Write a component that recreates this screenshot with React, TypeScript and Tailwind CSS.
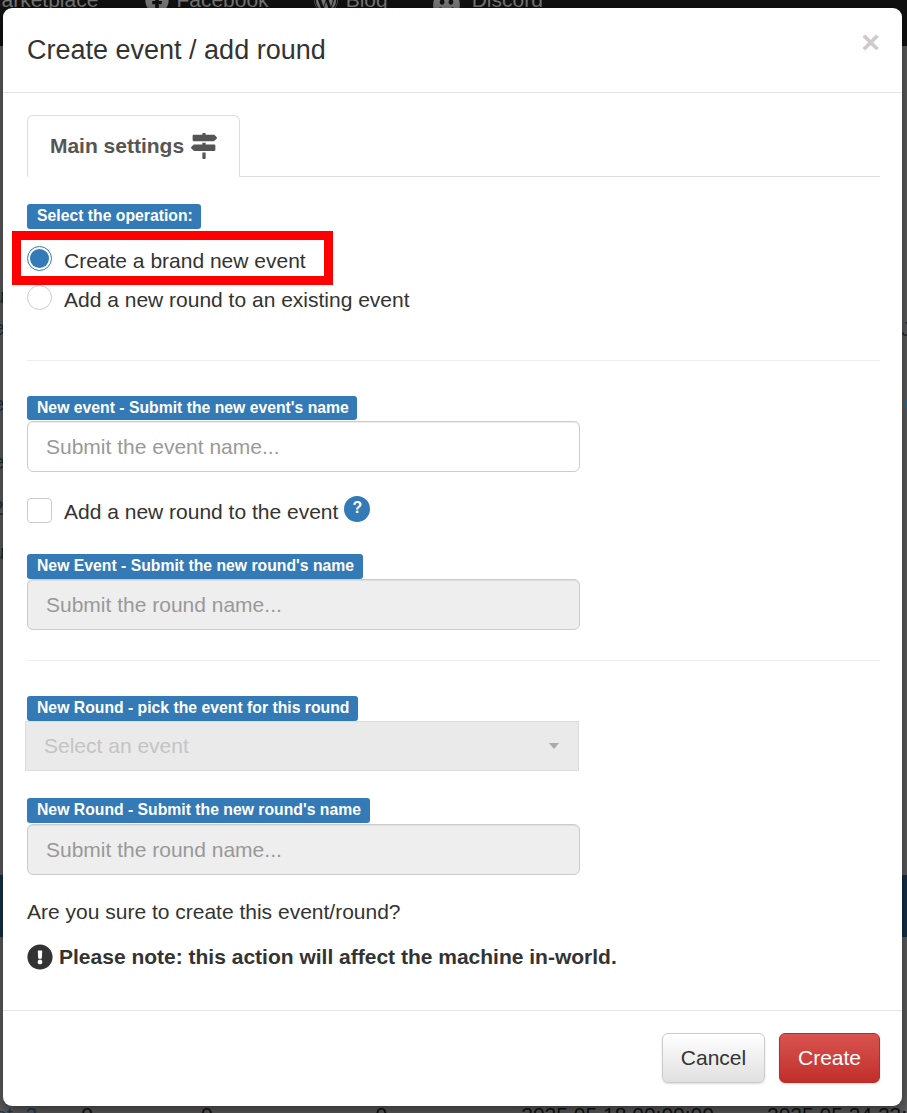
import React from 'react';
import { FaMapSigns, FaExclamationCircle, FaFacebook, FaWordpress, FaDiscord } from 'react-icons/fa';

const font = { fontFamily: '"Liberation Sans", Arial, sans-serif' };

function Badge({ children, className = '' }: { children: React.ReactNode; className?: string }) {
  return (
    <div className={`flex items-center rounded-[3px] bg-[#337ab7] px-[10px] text-[15.75px] font-bold leading-none whitespace-nowrap text-white ${className}`}>
      {children}
    </div>
  );
}

function TextField({ placeholder, disabled }: { placeholder: string; disabled?: boolean }) {
  return (
    <input
      type="text"
      disabled={disabled}
      placeholder={placeholder}
      className={`block h-[51px] w-[553px] rounded-[6px] border border-[#ccc] px-[18px] text-[21px] text-[#555] shadow-[inset_0_1px_1px_rgba(0,0,0,0.075)] outline-none placeholder:text-[#999] placeholder:opacity-100 ${disabled ? 'bg-[#eee]' : 'bg-white'}`}
    />
  );
}

function Radio({ checked }: { checked?: boolean }) {
  return (
    <span className={`flex h-[25px] w-[25px] shrink-0 items-center justify-center rounded-full border bg-white ${checked ? 'border-[#337ab7]' : 'border-[#ccc]'}`}>
      {checked && <span className="h-[19px] w-[19px] rounded-full bg-[#337ab7]" />}
    </span>
  );
}

export default function App() {
  return (
    <div className="relative h-[1113px] w-full overflow-hidden bg-[#5e5e5e]" style={font}>
      {/* page behind the backdrop */}
      <div className="flex h-[46px] items-start bg-[#111] text-[21px] leading-none text-[#777]">
        <span className="-mt-[11px] -ml-[16px]">Marketplace</span>
        <FaFacebook className="-mt-[11px] ml-[47px] h-[24px] w-[24px]" />
        <span className="-mt-[11px] ml-[7px]">Facebook</span>
        <FaWordpress className="-mt-[11px] ml-[45px] h-[24px] w-[24px]" />
        <span className="-mt-[11px] ml-[8px]">Blog</span>
        <FaDiscord className="-mt-[11px] ml-[44px] h-[24px] w-[29px]" />
        <span className="-mt-[11px] ml-[11px]">Discord</span>
      </div>
      <div className="mt-[829px] h-[62px] bg-[#16304a]" />
      <div className="text-[21px] leading-none text-[#1f2f3d]">
        <span className="absolute -left-[7px] top-[285px]">u</span>
        <span className="absolute -left-[7px] top-[317px]">e</span>
        <span className="absolute -left-[7px] top-[393px]">e</span>
        <span className="absolute -left-[7px] top-[451px]">e</span>
        <span className="absolute -left-[8px] top-[497px]">2</span>
        <span className="absolute -left-[7px] top-[541px]">u</span>
        <span className="absolute left-[901px] top-[318px]">J</span>
        <div className="absolute left-[902px] top-[397px] h-[13px] w-[10px] rounded-full border border-[#7a5a30] bg-[#3a6a8a]" />
      </div>
      <div className="absolute bottom-[-12px] left-0 flex w-full text-[21px] leading-none text-[#111]">
        <span className="-ml-[5px] text-[#1b3f63]">ot</span>
        <span className="ml-[13px] text-[#1b3f63]">2</span>
        <span className="ml-[44px]">0</span>
        <span className="ml-[108px]">0</span>
        <span className="ml-[163px]">0</span>
        <span className="ml-[134px] whitespace-nowrap">2025.05.18 00:00:00</span>
        <span className="ml-[53px] whitespace-nowrap">2025.05.24 23:59:59</span>
      </div>

      <div className="absolute left-[3px] top-[8px] flex h-[1098px] w-[899px] flex-col rounded-[9px] bg-white text-[#333] shadow-[0_5px_15px_rgba(0,0,0,0.5)]">
        <div className="relative h-[85px] border-b border-[#e5e5e5] px-[24px] pt-[26px]">
          <h4 className="text-[27px] leading-[32px]">Create event / add round</h4>
          <span className="absolute right-[22px] top-[15px] text-[32px] font-bold leading-[38px] text-[#ccc]">×</span>
        </div>

        <div className="flex-1 pl-[24px] pr-[22px] pt-[22px]">
          <div className="flex h-[62px] border-b border-[#ddd]">
            <div className="-mb-px flex h-[62px] w-[213px] items-center justify-center gap-[7px] rounded-t-[6px] border border-b-0 border-[#ddd] bg-white pb-[2px] text-[21px] font-bold text-[#555]">
              Main settings <FaMapSigns className="h-[26px] w-[26px]" />
            </div>
          </div>

          <Badge className="mt-[27px] h-[25px] w-[174px] pb-[2px]">Select the operation:</Badge>
          <div className="relative mt-[15px] flex h-[29px] items-center gap-[12px] text-[21px]">
            <Radio checked />
            <span className="pt-[5px]">Create a brand new event</span>
            <div className="pointer-events-none absolute -left-[15px] -top-[13px] h-[54px] w-[321px] border-[9px] border-[#f00]" />
          </div>
          <div className="mt-[10px] flex h-[29px] items-center gap-[12px] text-[21px]">
            <Radio />
            <span className="pt-[5px]">Add a new round to an existing event</span>
          </div>

          <div className="mt-[48px] border-t border-[#eee]" />

          <Badge className="mt-[35px] h-[24px] w-[330px]">New event - Submit the new event's name</Badge>
          <div className="mt-px"><TextField placeholder="Submit the event name..." /></div>

          <div className="mt-[25px] flex h-[26px] items-center text-[21px]">
            <span className="h-[25px] w-[25px] shrink-0 rounded-[4px] border border-[#ccc] bg-white" />
            <span className="ml-[12px] pt-[3px]">Add a new round to the event</span>
            <span className="ml-[6px] -mt-[2px] flex h-[26px] w-[26px] items-center justify-center rounded-full bg-[#337ab7] pb-[3px] text-[16px] font-bold leading-none text-white">?</span>
          </div>

          <Badge className="mt-[31px] h-[25px] w-[336px] pb-[2px]">New Event - Submit the new round's name</Badge>
          <TextField disabled placeholder="Submit the round name..." />

          <div className="mt-[30px] border-t border-[#eee]" />

          <Badge className="mt-[35px] h-[25px] w-[331px] pb-[2px]">New Round - pick the event for this round</Badge>
          <div className="-ml-[2px] flex h-[50px] w-[554px] items-center justify-between border border-[#ddd] bg-[#eaeaea] pl-[18px] pr-[19px] text-[21px] text-[#c4c4c4]">
            <span>Select an event</span>
            <span className="h-0 w-0 border-x-[5px] border-t-[6px] border-x-transparent border-t-[#aaa]" />
          </div>

          <Badge className="mt-[27px] h-[25px] w-[343px] pb-[2px]">New Round - Submit the new round's name</Badge>
          <div className="mt-px"><TextField disabled placeholder="Submit the round name..." /></div>

          <p className="mt-[25px] text-[21px] leading-[24px]">Are you sure to create this event/round?</p>
          <div className="mt-[20px] flex h-[26px] items-center gap-[6px] text-[21px] font-bold">
            <FaExclamationCircle className="h-[26px] w-[26px] shrink-0" />
            <span>Please note: this action will affect the machine in-world.</span>
          </div>
        </div>

        <div className="flex h-[96px] items-start justify-end gap-[14px] border-t border-[#e5e5e5] px-[22px] pt-[22px]">
          <button className="h-[50px] w-[103px] rounded-[6px] border border-[#ccc] bg-gradient-to-b from-white to-[#e0e0e0] text-[21px] text-[#333] shadow-[0_1px_2px_rgba(0,0,0,0.15)]">
            Cancel
          </button>
          <button className="h-[50px] w-[101px] rounded-[6px] border border-[#b92c28] bg-gradient-to-b from-[#d9534f] to-[#c12e2a] text-[21px] text-white shadow-[0_1px_2px_rgba(0,0,0,0.15)]">
            Create
          </button>
        </div>
      </div>
    </div>
  );
}
